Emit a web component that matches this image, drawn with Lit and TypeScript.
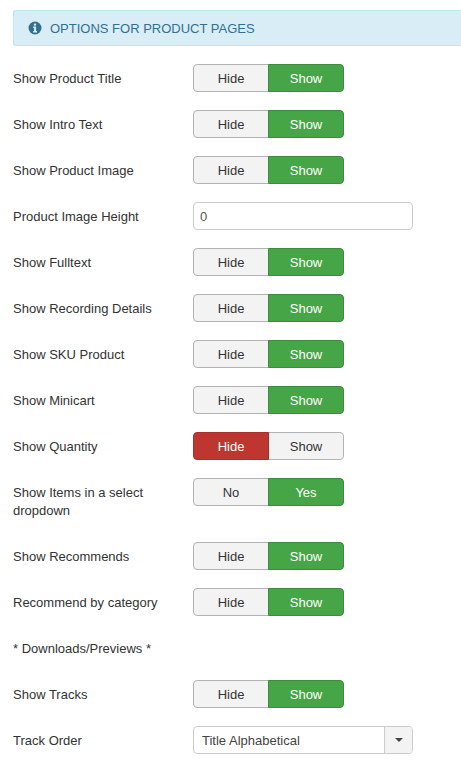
import { LitElement, html, css } from "lit";
import { customElement } from "lit/decorators.js";

type Row =
  | { label: string; kind: "toggle"; left?: string; right?: string; active?: "left" | "right" }
  | { label: string; kind: "input"; value: string }
  | { label: string; kind: "select"; value: string }
  | { label: string; kind: "text" };

const rows: Row[] = [
  { label: "Show Product Title", kind: "toggle" },
  { label: "Show Intro Text", kind: "toggle" },
  { label: "Show Product Image", kind: "toggle" },
  { label: "Product Image Height", kind: "input", value: "0" },
  { label: "Show Fulltext", kind: "toggle" },
  { label: "Show Recording Details", kind: "toggle" },
  { label: "Show SKU Product", kind: "toggle" },
  { label: "Show Minicart", kind: "toggle" },
  { label: "Show Quantity", kind: "toggle", active: "left" },
  { label: "Show Items in a select dropdown", kind: "toggle", left: "No", right: "Yes" },
  { label: "Show Recommends", kind: "toggle" },
  { label: "Recommend by category", kind: "toggle" },
  { label: "* Downloads/Previews *", kind: "text" },
  { label: "Show Tracks", kind: "toggle" },
  { label: "Track Order", kind: "select", value: "Title Alphabetical" },
];

@customElement("app-root")
export class AppRoot extends LitElement {
  static styles = css`
    :host {
      display: block;
      width: 461px;
      height: 763px;
      overflow: hidden;
      background: #fff;
      font-family: "Liberation Sans", Arial, sans-serif;
      font-size: 13px;
      color: #333;
      box-sizing: border-box;
      padding: 10px 0 0 13px;
    }
    .alert {
      display: flex;
      align-items: center;
      gap: 8px;
      height: 36px;
      box-sizing: border-box;
      padding-left: 14px;
      margin-right: -13px;
      background: #d9edf7;
      border: 1px solid #bce8f1;
      border-right: none;
      border-radius: 3px 0 0 3px;
      color: #31708f;
      text-transform: uppercase;
      font-size: 13px;
    }
    .alert svg { width: 14px; height: 14px; display: block; }
    .rows { margin-top: 18px; display: flex; flex-direction: column; gap: 18px; }
    .row { display: flex; align-items: flex-start; min-height: 28px; }
    .label {
      width: 180px;
      line-height: 18px;
      padding: 6px 20px 4px 0;
      flex: none;
      box-sizing: border-box;
    }
    .group { display: flex; width: 151px; height: 28px; }
    .btn {
      box-sizing: border-box;
      height: 28px;
      display: flex;
      align-items: center;
      justify-content: center;
      border: 1px solid #b3b3b3;
      background: #f3f3f3;
      color: #333;
    }
    .btn.l { width: 76px; border-radius: 4px 0 0 4px; }
    .btn.r { width: 76px; margin-left: -1px; border-radius: 0 4px 4px 0; }
    .btn.on-g { background: #46a546; border-color: #3d8b3d; color: #fff; }
    .btn.on-r { background: #bd362f; border-color: #a9302a; color: #fff; position: relative; }
    .input {
      box-sizing: border-box;
      width: 220px;
      height: 28px;
      border: 1px solid #ccc;
      border-radius: 4px;
      padding-left: 6px;
      display: flex;
      align-items: center;
      background: #fff;
      color: #555;
    }
    .select {
      box-sizing: border-box;
      width: 220px;
      height: 28px;
      border: 1px solid #ccc;
      border-radius: 4px;
      display: flex;
      align-items: center;
      background: #fff;
      color: #444;
    }
    .select .v { flex: 1; padding-left: 8px; }
    .select .arrow {
      box-sizing: border-box;
      width: 28px;
      height: 100%;
      background: #f3f3f3;
      border-left: 1px solid #ccc;
      border-radius: 0 3px 3px 0;
      display: flex;
      align-items: center;
      justify-content: center;
    }
    .caret {
      width: 0;
      height: 0;
      border-left: 4px solid transparent;
      border-right: 4px solid transparent;
      border-top: 4px solid #444;
    }
  `;

  private control(r: Row) {
    if (r.kind === "toggle") {
      const active = r.active ?? "right";
      return html`<div class="group">
        <div class="btn l ${active === "left" ? "on-r" : ""}">${r.left ?? "Hide"}</div>
        <div class="btn r ${active === "right" ? "on-g" : ""}">${r.right ?? "Show"}</div>
      </div>`;
    }
    if (r.kind === "input") return html`<div class="input">${r.value}</div>`;
    if (r.kind === "select")
      return html`<div class="select"><span class="v">${r.value}</span><span class="arrow"><span class="caret"></span></span></div>`;
    return null;
  }

  render() {
    return html`
      <div class="alert">
        <svg viewBox="0 0 14 14">
          <circle cx="7" cy="7" r="6.5" fill="#31708f"></circle>
          <rect x="5.9" y="2.6" width="2.2" height="2" fill="#d9edf7"></rect>
          <path d="M5.2 5.6h2.9v4.5h0.9v1.3H5.2v-1.3h0.9V6.9h-0.9z" fill="#d9edf7"></path>
        </svg>
        <span>Options for Product Pages</span>
      </div>
      <div class="rows">
        ${rows.map(
          (r) => html`<div class="row">
            <div class="label">${r.label}</div>
            ${this.control(r)}
          </div>`
        )}
      </div>
    `;
  }
}
